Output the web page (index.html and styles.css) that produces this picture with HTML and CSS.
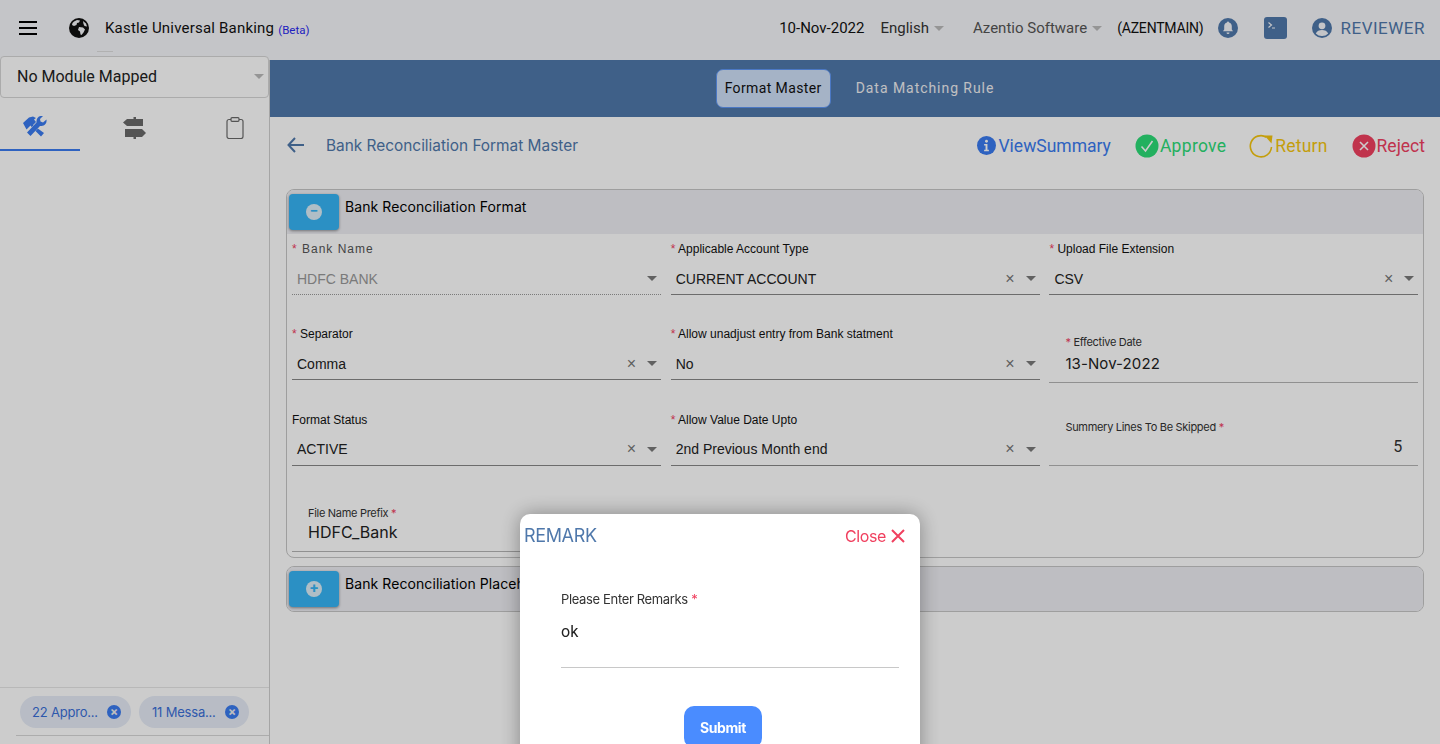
FILE: index.html
```html
<!DOCTYPE html>
<html lang="en">
<head>
<meta charset="utf-8">
<title>Kastle Universal Banking</title>
<link rel="stylesheet" href="styles.css">
</head>
<body>
<div class="app">
  <header class="topbar">
    <div class="brand">
      <svg class="menu-icon" width="18" height="14" viewBox="0 0 18 14"><path d="M0 0h18v2H0zM0 6h18v2H0zM0 12h18v2H0z" fill="#000"/></svg>
      <svg class="globe" width="20" height="20" viewBox="0 0 20 20"><circle cx="10" cy="10" r="10" fill="#111"/><path d="M5 3.500l3-1.500 3 .5-1 2-2 .5-.5 2-2.500 1-2-1 .5-2zM10 9l4 .5 2 2-1.500 3-2 2.500-1-.5-.5-3-2-1.500zM14 3l3 2.500 1 3-2.500-.5-1-2z" fill="#f6f7fa"/></svg>
      <span class="app-name">Kastle Universal Banking</span>
      <span class="beta">(Beta)</span>
    </div>
    <div class="top-right">
      <span class="date">10-Nov-2022</span>
      <span class="drop lang">English<i class="caret"></i></span>
      <span class="drop company">Azentio Software<i class="caret"></i></span>
      <span class="code">(AZENTMAIN)</span>
      <svg class="bell" width="20" height="20" viewBox="0 0 20 20"><circle cx="10" cy="10" r="10" fill="#4f78ab"/><path d="M10 3.600a1 1 0 0 1 1 1c2 .5 2.800 2 2.800 4v3l1.200 1.600H5l1.200-1.600v-3c0-2 .8-3.500 2.800-4a1 1 0 0 1 1-1zM8.500 14.500h3a1.500 1.500 0 0 1-3 0z" fill="#f6f7fa"/></svg>
      <svg class="term" width="23" height="22" viewBox="0 0 23 22"><rect width="23" height="22" rx="3" fill="#4f78ab"/><path d="M4.500 5.500l3 2.500-3 2.500" fill="none" stroke="#f6f7fa" stroke-width="1.200"/><path d="M8 11h3" stroke="#f6f7fa" stroke-width="1"/></svg>
      <svg class="user" width="20" height="20" viewBox="0 0 20 20"><circle cx="10" cy="10" r="10" fill="#4f78ab"/><circle cx="10" cy="7.800" r="3.400" fill="#f6f7fa"/><path d="M3.800 15.500c1-2.700 3.500-3.600 6.200-3.600s5.200.9 6.200 3.600A8.500 8.500 0 0 1 10 18a8.500 8.500 0 0 1-6.200-2.500z" fill="#f6f7fa"/></svg>
      <span class="role">REVIEWER</span>
    </div>
  </header>

  <div class="body-row">
    <aside class="sidebar">
      <div class="module"><span>No Module Mapped</span><i class="caret light"></i></div>
      <nav class="side-tabs">
        <div class="side-tab active">
          <svg width="24" height="22" viewBox="0 0 24 22"><path d="M0 7l6-5.500L10 .5l3 1.500-2 1.500 2 2.500-3 3 11 8-3 3.500-9-9-1.500-2-4 4z" fill="#3a7bf0"/><path d="M23.500 3.500l-3.500 3-2.500-1-.5-2.500 3-3c-3-.7-6.500 1.300-6.500 5v1.500l-9.500 10 3.500 3.500 9.500-10h1.500c3.500 0 5.500-3 5-6.500z" fill="#3a7bf0" stroke="#fff" stroke-width=".8" paint-order="stroke"/></svg>
        </div>
        <div class="side-tab">
          <svg width="24" height="22" viewBox="0 0 24 22"><path d="M10.500 0h2.500v2h7v7H4L0 5.500 4 2h6.500zM2 12h17l4 4-4 4h-6v2h-2.500v-2H2z" fill="#6a6a6a"/></svg>
        </div>
        <div class="side-tab">
          <svg width="18" height="22" viewBox="0 0 18 22"><rect x="1" y="2.500" width="16" height="19" rx="2" fill="none" stroke="#6a6a6a" stroke-width="1.200"/><rect x="5" y="0.700" width="8" height="3.600" rx="1" fill="#fff" stroke="#6a6a6a" stroke-width="1.200"/></svg>
        </div>
      </nav>
      <div class="side-fill"></div>
      <div class="chips">
        <span class="chip"><span class="chip-text">22 Appro...</span><i class="chip-x">×</i></span>
        <span class="chip"><span class="chip-text">11 Messa...</span><i class="chip-x">×</i></span>
      </div>
      <div class="chips-line"></div>
    </aside>

    <main class="content">
      <div class="tabbar">
        <span class="tab selected">Format Master</span>
        <span class="tab">Data Matching Rule</span>
      </div>
      <div class="titlebar">
        <div class="title">
          <svg width="17" height="16" viewBox="0 0 17 16"><path d="M8 1L1.500 8 8 15M1.500 8H17" fill="none" stroke="#4f78ab" stroke-width="2"/></svg>
          <span>Bank Reconciliation Format Master</span>
        </div>
        <div class="actions">
          <span class="action a-view"><svg width="19" height="19" viewBox="0 0 20 20"><circle cx="10" cy="10" r="10" fill="#3a7bf0"/><circle cx="10" cy="5.500" r="1.500" fill="#fff"/><path d="M7.500 8.500H11v6h1.500V16h-5v-1.500H9V10H7.500z" fill="#fff"/></svg>ViewSummary</span>
          <span class="action a-ok"><svg width="24" height="24" viewBox="0 0 24 24"><circle cx="12" cy="12" r="11.500" fill="#2cdc77"/><path d="M6.500 12.500l4 4.500 7-10" fill="none" stroke="#fff" stroke-width="1.600"/></svg>Approve</span>
          <span class="action a-ret"><svg width="24" height="24" viewBox="0 0 24 24"><path d="M17.500 3.200A10.600 10.600 0 1 0 22.500 13" fill="none" stroke="#f5c60f" stroke-width="1.600"/><path d="M15.500 1.500h8l-1 8z" fill="#f5c60f"/></svg>Return</span>
          <span class="action a-rej"><svg width="24" height="24" viewBox="0 0 24 24"><circle cx="12" cy="12" r="11.500" fill="#f0405f"/><path d="M8 8l8 8M16 8l-8 8" stroke="#fff" stroke-width="1.600"/></svg>Reject</span>
        </div>
      </div>

      <section class="panel">
        <div class="panel-head">
          <span class="toggle"><i class="toggle-ico">−</i></span>
          <h2>Bank Reconciliation Format</h2>
        </div>
        <div class="form-grid">
          <div class="field disabled">
            <label class="spaced"><b>*</b> Bank Name</label>
            <div class="select"><span>HDFC BANK</span><i class="caret dark"></i></div>
          </div>
          <div class="field">
            <label><b>*</b> Applicable Account Type</label>
            <div class="select"><span>CURRENT ACCOUNT</span><em>×</em><i class="caret dark"></i></div>
          </div>
          <div class="field">
            <label><b>*</b> Upload File Extension</label>
            <div class="select"><span>CSV</span><em>×</em><i class="caret dark"></i></div>
          </div>
          <div class="field">
            <label><b>*</b> Separator</label>
            <div class="select"><span>Comma</span><em>×</em><i class="caret dark"></i></div>
          </div>
          <div class="field">
            <label><b>*</b> Allow unadjust entry from Bank statment</label>
            <div class="select"><span>No</span><em>×</em><i class="caret dark"></i></div>
          </div>
          <div class="field input-field">
            <label><b>*</b> Effective Date</label>
            <div class="input">13-Nov-2022</div>
          </div>
          <div class="field">
            <label>Format Status</label>
            <div class="select"><span>ACTIVE</span><em>×</em><i class="caret dark"></i></div>
          </div>
          <div class="field">
            <label><b>*</b> Allow Value Date Upto</label>
            <div class="select"><span>2nd Previous Month end</span><em>×</em><i class="caret dark"></i></div>
          </div>
          <div class="field input-field skip">
            <label>Summery Lines To Be Skipped <b>*</b></label>
            <div class="input num">5</div>
          </div>
          <div class="field input-field prefix">
            <label>File Name Prefix <b>*</b></label>
            <div class="input">HDFC_Bank</div>
          </div>
        </div>
      </section>

      <section class="panel collapsed">
        <div class="panel-head">
          <span class="toggle"><i class="toggle-ico">+</i></span>
          <h2>Bank Reconciliation Placeholder</h2>
        </div>
      </section>
    </main>
  </div>
</div>

<div class="backdrop"></div>

<div class="modal">
  <div class="modal-head">
    <span class="modal-title">REMARK</span>
    <span class="modal-close">Close <svg width="14" height="14" viewBox="0 0 14 14"><path d="M1 1l12 12M13 1L1 13" stroke="#f0405f" stroke-width="2"/></svg></span>
  </div>
  <div class="modal-body">
    <label class="remark-label">Please Enter Remarks <b>*</b></label>
    <div class="remark-input">ok</div>
    <div class="submit-row"><button class="submit">Submit</button></div>
  </div>
</div>
</body>
</html>
```
FILE: styles.css
```css
* { box-sizing: border-box; }
html, body { margin: 0; height: 744px; overflow: hidden; }
body { font-family: Roboto, "Liberation Sans", sans-serif; color: #111; background: #fff; }
i, em { font-style: normal; }

.app { height: 744px; display: flex; flex-direction: column; }

.topbar { height: 60px; flex: none; background: #f6f7fa; display: flex; align-items: center; justify-content: space-between; padding: 0 15px 4px 19px; }
.brand { display: flex; align-items: center; }
.globe { margin-left: 32px; }
.app-name { margin-left: 16px; font-size: 15px; color: #111; letter-spacing: .2px; }
.beta { margin-left: 4px; font-size: 11.500px; color: #2a2af0; margin-top: 3px; }
.top-right { display: flex; align-items: center; font-size: 15px; }
.date { color: #111; }
.drop { color: #333; display: flex; align-items: center; }
.lang { margin-left: 16px; }
.company { margin-left: 29px; color: #555; }
.caret { display: inline-block; width: 0; height: 0; border: 5px solid transparent; border-top-color: #bbb; border-bottom: 0; margin-left: 5px; }
.caret.dark { border-top-color: #7a7a7a; margin-left: 0; }
.code { margin-left: 15px; font-size: 14px; color: #111; letter-spacing: -.2px; }
.bell { margin-left: 14px; }
.term { margin-left: 26px; }
.user { margin-left: 25px; }
.role { margin-left: 9px; font-size: 17px; color: #4f78ab; letter-spacing: .5px; }

.body-row { flex: 1; display: flex; min-height: 0; }
.sidebar { width: 270px; flex: none; background: #fff; border-right: 1px solid #cfcfcf; display: flex; flex-direction: column; }
.module { position: relative; height: 42px; margin-top: -4px; background: #fff; border: 1px solid #d6d6d6; border-radius: 4px; display: flex; align-items: center; justify-content: space-between; padding: 0 4px 2px 16px; font-size: 16px; color: #222; }
.module::before { content: ""; position: absolute; left: 96px; top: -6px; width: 16px; height: 1px; background: #dedede; }
.side-tabs { display: flex; height: 53px; }
.side-tab { flex: 0 0 80px; display: flex; align-items: center; justify-content: center; padding: 6px 10px 0 0; }
.side-tab + .side-tab { margin-left: 20px; }
.side-tab.active { border-bottom: 2px solid #3a7bf0; }
.side-fill { flex: 1; }
.chips { height: 48px; border-top: 1px solid #e6e6e6; display: flex; align-items: center; padding: 0 0 0 20px; gap: 8px; }
.chip { height: 32px; width: 111px; border-radius: 16px; background: #e6ecf7; display: flex; align-items: center; justify-content: space-between; padding: 0 10px 0 12px; font-family: Inter, sans-serif; font-size: 13px; letter-spacing: -.2px; color: #3a6fd8; }
.chip + .chip { width: 110px; padding-left: 13px; }
.chip-x { width: 14px; height: 14px; border-radius: 50%; background: #3a7bf0; color: #eee; font-size: 12px; line-height: 14px; text-align: center; font-weight: 700; }
.chips-line { height: 9px; margin-left: 16px; border-top: 1px solid #d8d8d8; }

.content { flex: 1; min-width: 0; background: #fff; }
.tabbar { height: 57px; background: #4f78ab; display: flex; align-items: center; justify-content: center; gap: 25px; font-size: 14px; padding: 0 0 1px 0; }
.tab { color: #f0f0f2; letter-spacing: .95px; }
.tab.selected { height: 39px; padding: 0 8px; display: flex; align-items: center; background: #cfe0f8; border: 1px solid #5e97f5; border-radius: 7px; color: #111; letter-spacing: .38px; }
.titlebar { display: flex; justify-content: space-between; align-items: center; padding: 0 15px 0 17px; height: 56px; margin-bottom: 16px; }
.title { display: flex; align-items: center; gap: 22px; font-size: 15.400px; color: #4f78ab; font-family: Inter, sans-serif; }
.actions { display: flex; align-items: center; font-size: 17.500px; }
.action { display: flex; align-items: center; gap: 2px; padding-top: 1px; }
.action + .action { margin-left: 23px; }
.a-view { color: #3a7bf0; }
.a-ok { color: #2cdc77; gap: 1px; letter-spacing: .3px; margin-left: 24px; }
.a-ret { color: #f5c60f; letter-spacing: .2px; }
.a-rej { color: #f0405f; gap: 1px; }
.action.a-ok, .action.a-rej { margin-left: 24px; }

.panel { margin: 0 16px; border: 1px solid #c6c6c6; border-radius: 8px; height: 369px; overflow: hidden; }
.panel.collapsed { height: 46px; margin-top: 8px; }
.panel-head { height: 44px; background: #eeeef3; display: flex; align-items: flex-start; }
.toggle { width: 50px; height: 36px; margin: 4px 0 0 2px; background: #36b5f5; border-radius: 4px; box-shadow: 0 1px 3px rgba(0,0,0,.4); display: flex; align-items: center; justify-content: center; }
.toggle-ico { width: 16px; height: 16px; border-radius: 50%; background: #ddeef8; color: #36b5f5; font-size: 15px; line-height: 15px; text-align: center; font-weight: 700; }
h2 { margin: 8px 0 0 6px; font-family: Inter, sans-serif; font-weight: 400; font-size: 14px; color: #000; letter-spacing: .08px; white-space: nowrap; }

.form-grid { display: grid; grid-template-columns: repeat(3, 369px); grid-auto-rows: 85.300px; column-gap: 9.700px; padding: 8px 0 0 5px; }
.field { font-family: "Liberation Sans", Arial, sans-serif; }
.field label { display: block; height: 15px; line-height: 15px; font-size: 12px; color: #111; }
.field label b { color: #f0405f; font-weight: 400; }
.field .spaced { letter-spacing: 1px; color: #555; }
.select { margin-top: 6px; height: 32px; padding: 0 4px 0 5px; border-bottom: 1px solid #888; display: flex; align-items: center; gap: 8px; font-size: 14px; color: #222; }
.select span { flex: 1; }
.select em { font-size: 16px; color: #777; line-height: 14px; margin-right: 3px; }
.disabled .select { border-bottom: 1px dotted #999; color: #999; }
.input-field { padding-top: 8px; }
.input-field label { padding-left: 16px; font-family: Inter, sans-serif; font-size: 11px; letter-spacing: -.3px; color: #333; }
.input { margin-top: 3px; height: 30px; padding: 0 0 0 16px; font-family: Inter, sans-serif; font-size: 15px; letter-spacing: .1px; color: #222; border-bottom: 1px solid #b5b5b5; line-height: 22px; }
.skip { padding-top: 7px; }
.input.num { margin-top: 0; height: 31px; padding-right: 16px; text-align: right; font-family: Roboto, sans-serif; font-size: 16px; line-height: 24px; color: #333; }
.prefix { grid-column: 1; }
.prefix .input { margin-top: -2px; height: 33px; font-size: 16px; line-height: 26px; letter-spacing: 0; }

.backdrop { position: fixed; inset: 0; background: rgba(0,0,0,.2); }
.modal { position: fixed; left: 520px; top: 514px; width: 400px; height: 300px; background: #fff; border-radius: 10px; box-shadow: 0 0 20px rgba(0,0,0,.35); }
.modal-head { display: flex; justify-content: space-between; align-items: center; padding: 11px 15px 0 4px; }
.modal-title { font-family: Inter, sans-serif; font-size: 18px; color: #4f78ab; letter-spacing: -.35px; }
.modal-close { display: flex; align-items: center; gap: 5px; font-family: Inter, sans-serif; font-size: 16px; color: #f0405f; letter-spacing: -.4px; }
.modal-body { padding: 45px 21px 0 41px; }
.remark-label { display: block; font-family: Inter, sans-serif; font-size: 13px; letter-spacing: -.35px; color: #333; }
.remark-label b { color: #f0405f; font-weight: 400; }
.remark-input { margin-top: 8px; height: 53px; border-bottom: 1px solid #c8c8c8; font-size: 16px; color: #222; line-height: 34px; }
.submit-row { display: flex; justify-content: center; margin-top: 38px; padding-right: 14px; }
.submit { width: 78px; height: 42px; border: 0; border-radius: 10px; background: #4a8cff; color: #fff; font-family: Inter, sans-serif; font-weight: 700; font-size: 14px; letter-spacing: -.4px; padding: 0; }
```
